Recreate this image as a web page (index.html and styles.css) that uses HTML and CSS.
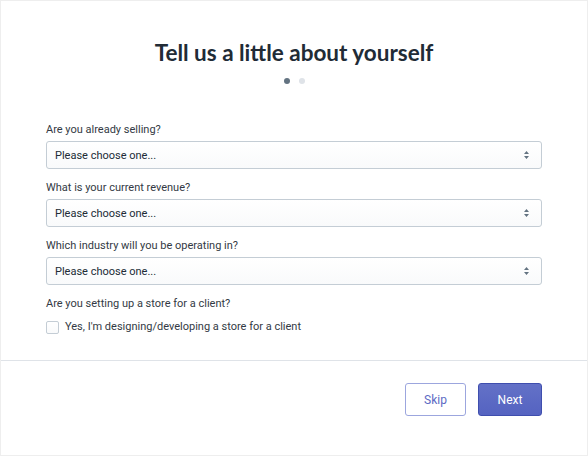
FILE: index.html
```html
<!DOCTYPE html>
<html lang="en">
<head>
    <meta charset="UTF-8">
    <meta name="viewport" content="width=device-width, initial-scale=1.0">
    <title>Tell us a little about yourself</title>
    <link rel="stylesheet" href="styles.css">
</head>
<body>
    <div class="page">
        <div class="content">
            <h1>Tell us a little about yourself</h1>
            <div class="dots">
                <span class="dot active"></span>
                <span class="dot"></span>
            </div>

            <div class="form-group">
                <label for="selling">Are you already selling?</label>
                <div class="select">
                    <span>Please choose one...</span>
                    <svg width="7" height="10" viewBox="0 0 7 10"><path d="M3.5 1 L6 4 H1 Z M3.5 9 L6 6 H1 Z" fill="#637381"/></svg>
                </div>
            </div>
            <div class="form-group">
                <label for="revenue">What is your current revenue?</label>
                <div class="select">
                    <span>Please choose one...</span>
                    <svg width="7" height="10" viewBox="0 0 7 10"><path d="M3.5 1 L6 4 H1 Z M3.5 9 L6 6 H1 Z" fill="#637381"/></svg>
                </div>
            </div>
            <div class="form-group">
                <label for="industry">Which industry will you be operating in?</label>
                <div class="select">
                    <span>Please choose one...</span>
                    <svg width="7" height="10" viewBox="0 0 7 10"><path d="M3.5 1 L6 4 H1 Z M3.5 9 L6 6 H1 Z" fill="#637381"/></svg>
                </div>
            </div>
            <div class="form-group">
                <label>Are you setting up a store for a client?</label>
                <div class="check">
                    <span class="box"></span>
                    <span>Yes, I'm designing/developing a store for a client</span>
                </div>
            </div>
        </div>
        <div class="footer">
            <button class="skip">Skip</button>
            <button class="next">Next</button>
        </div>
    </div>
</body>
</html>
```

FILE: styles.css
```css
body {
    margin: 0;
    font-family: Roboto, "Liberation Sans", sans-serif;
    color: #212b36;
    background: #fff;
}
.page {
    height: 456px;
    box-sizing: border-box;
    border: 1px solid #eeeeee;
}
.content {
    padding: 36px 45px 0;
}
h1 {
    margin: 0;
    text-align: center;
    font-family: Lato, "Noto Sans", sans-serif;
    font-size: 22.5px;
    font-weight: 700;
    line-height: 32px;
}
.dots {
    display: flex;
    justify-content: center;
    gap: 9px;
    margin: 9px 0 39px;
}
.dot {
    width: 6px;
    height: 6px;
    border-radius: 50%;
    background: #dfe3e8;
}
.dot.active {
    background: #637381;
}
.form-group {
    margin-bottom: 12px;
}
label {
    display: block;
    font-size: 11px;
    line-height: 14px;
    margin-bottom: 4px;
    color: #333a44;
}
.select {
    display: flex;
    align-items: center;
    justify-content: space-between;
    height: 28px;
    box-sizing: border-box;
    padding: 0 11px 0 8px;
    border: 1px solid #c4cdd5;
    border-radius: 3px;
    background: linear-gradient(#ffffff, #f9fafb);
    font-size: 11px;
}
.check {
    display: flex;
    align-items: center;
    gap: 6px;
    margin-top: 9px;
    font-size: 11px;
    line-height: 14px;
    color: #333a44;
}
.box {
    width: 11px;
    height: 11px;
    border: 1px solid #c4cdd5;
    border-radius: 2px;
    background: linear-gradient(#ffffff, #f9fafb);
}
.footer {
    margin-top: 26px;
    border-top: 1px solid #dfe3e8;
    display: flex;
    justify-content: flex-end;
    gap: 12px;
    padding: 22px 45px 0;
}
button {
    height: 33px;
    padding: 0;
    border-radius: 3px;
    font-family: Roboto, "Liberation Sans", sans-serif;
    font-size: 12px;
    cursor: pointer;
}
.skip {
    background: #fff;
    border: 1px solid #9ca6de;
    color: #5c6ac4;
    width: 61px;
}
.next {
    background: linear-gradient(#6371c7, #5563c1);
    border: 1px solid #3f4eae;
    color: #fff;
    width: 64px;
}
```
